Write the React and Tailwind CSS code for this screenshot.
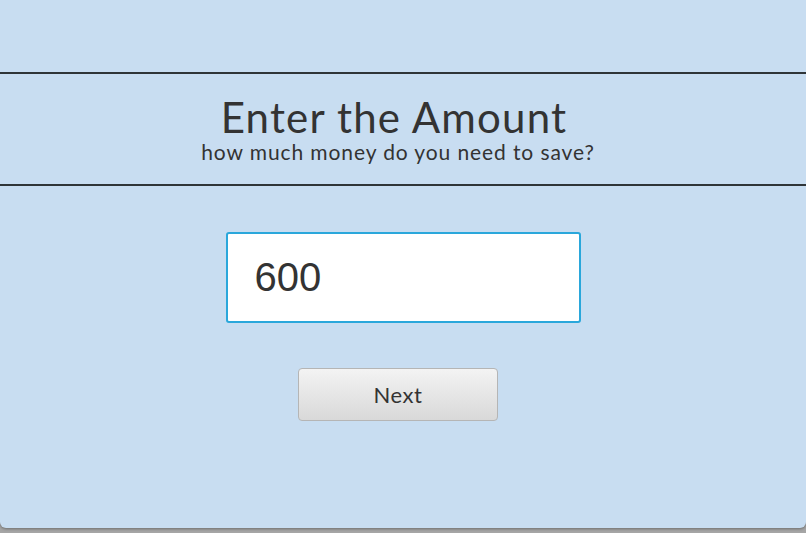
export default function App() {
    return (
        <div className="w-[806px] h-[533px] bg-[#a6a6a6] overflow-hidden">
            <div className="h-[528px] bg-[#c8ddf1] rounded-b-[6px] flex flex-col shadow-[0_1px_3px_rgba(0,0,0,0.35)]">
                <div className="h-[72px]"></div>
                <div className="border-t-2 border-b-2 border-[#2f3538] h-[114px] flex flex-col items-center pt-[18px] font-['Lato',sans-serif] text-[#333]">
                    <h1 className="mr-[18px] text-[42px] leading-[50px] tracking-[1.2px]">Enter the Amount</h1>
                    <p className="mr-[10px] text-[21px] leading-[20px] tracking-[0.9px]">how much money do you need to save?</p>
                </div>
                <div className="flex flex-col items-center pt-[46px]">
                    <input
                        type="text"
                        defaultValue="600"
                        className="w-[355px] h-[91px] bg-white border-2 border-[#2aa7db] rounded-[3px] pl-[27px] text-[40px] text-[#333] font-['Liberation_Sans',sans-serif] outline-none"
                    />
                    <button
                        type="button"
                        className="mt-[45px] mr-[10px] w-[200px] h-[53px] rounded-[4px] border border-[#b5b5b5] bg-gradient-to-b from-[#f3f3f3] to-[#d9d9d9] text-[22px] tracking-[0.5px] text-[#333] font-['Lato',sans-serif]"
                    >
                        Next
                    </button>
                </div>
            </div>
        </div>
    );
}
